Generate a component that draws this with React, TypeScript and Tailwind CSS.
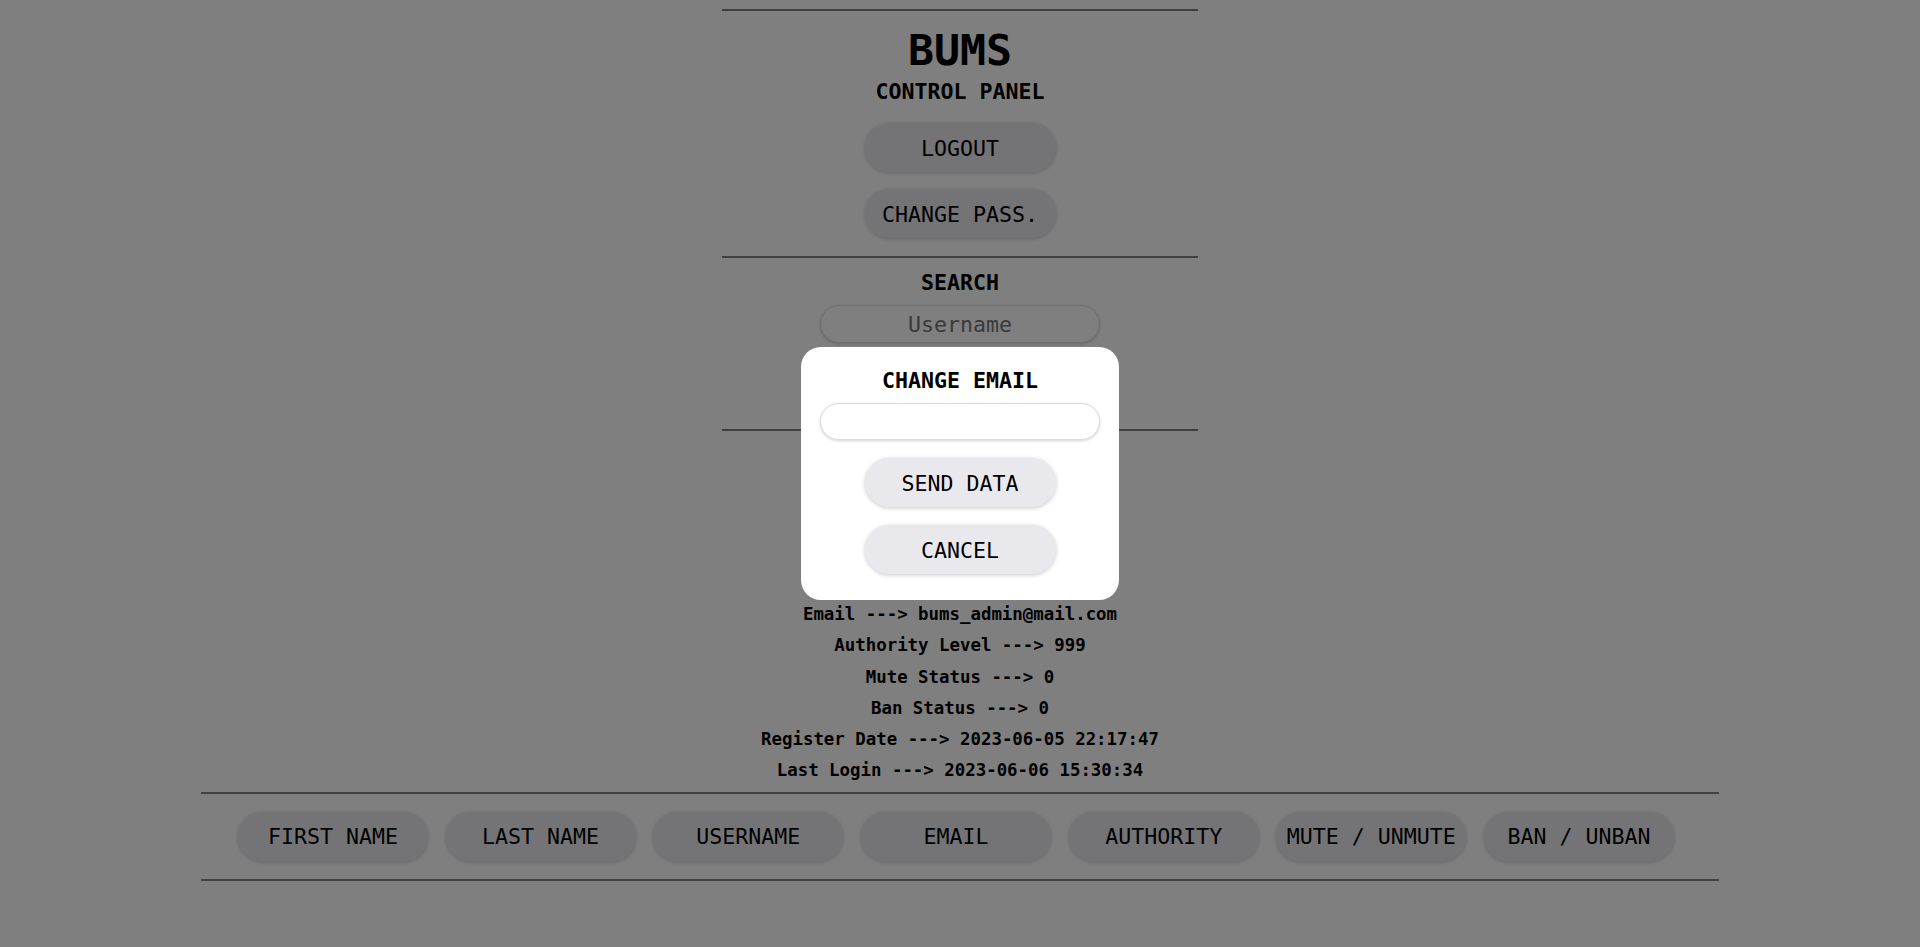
import { useState } from 'react'

const mono = "font-['DejaVu_Sans_Mono','Liberation_Mono',monospace]"

const pill =
    'h-[49px] rounded-full bg-[#e9e9ed] text-[21.6px] text-black shadow-[0_1px_4px_rgba(0,0,0,0.22)] flex items-center justify-center'

const userInfo = [
    ['Email', 'bums_admin@mail.com'],
    ['Authority Level', '999'],
    ['Mute Status', '0'],
    ['Ban Status', '0'],
    ['Register Date', '2023-06-05 22:17:47'],
    ['Last Login', '2023-06-06 15:30:34'],
]

const actions = ['FIRST NAME', 'LAST NAME', 'USERNAME', 'EMAIL', 'AUTHORITY', 'MUTE / UNMUTE', 'BAN / UNBAN']

export default function App() {
    const [search, setSearch] = useState('')
    const [email, setEmail] = useState('')
    const [modalOpen, setModalOpen] = useState(true)

    return (
        <div className={`min-h-screen bg-white text-black ${mono}`}>
            <div className="flex flex-col items-center">
                {/* Header */}
                <div className="w-[476px] flex flex-col items-center">
                    <hr className="w-full mt-[9px] border-0 border-t-2 border-[#808080]" />
                    <h1 className="mt-[14px] h-[50px] leading-[50px] text-[43.2px] font-bold">BUMS</h1>
                    <h2 className="mt-[4px] h-[26px] leading-[26px] text-[21.6px] font-bold">CONTROL PANEL</h2>
                    <button className={`${pill} pt-[4px] w-[191px] mt-[18px]`}>LOGOUT</button>
                    <button className={`${pill} pt-[4px] w-[191px] mt-[17px]`}>CHANGE PASS.</button>
                    <hr className="w-full mt-[18px] border-0 border-t-2 border-[#808080]" />

                    {/* Search */}
                    <h2 className="mt-[12px] h-[26px] leading-[26px] text-[21.6px] font-bold">SEARCH</h2>
                    <input
                        type="text"
                        placeholder="Username"
                        value={search}
                        onChange={(e) => setSearch(e.target.value)}
                        className="mt-[9px] w-[280px] h-[38px] rounded-full bg-white border border-[#dcdcdc] shadow-[0_1px_3px_rgba(0,0,0,0.18)] text-center text-[21.6px] placeholder:text-[#757575] focus:outline-none"
                    />
                    <hr className="w-full mt-[86px] border-0 border-t-2 border-[#808080]" />
                </div>

                {/* User info */}
                <div className="mt-[168px] flex flex-col items-center text-[17.4px] font-bold">
                    {userInfo.map(([label, value]) => (
                        <div key={label} className="h-[31.3px] leading-[31.3px] whitespace-pre">
                            {label} ---&gt; {value}
                        </div>
                    ))}
                </div>

                {/* Actions */}
                <div className="w-[1518px] mt-[5px]">
                    <hr className="w-full border-0 border-t-2 border-[#808080]" />
                    <div className="mt-[18px] pr-[8px] flex justify-center gap-[17.7px]">
                        {actions.map((a) => (
                            <button key={a} className={`${pill} pt-[2px] w-[190px] whitespace-pre`}>
                                {a}
                            </button>
                        ))}
                    </div>
                    <hr className="w-full mt-[18px] border-0 border-t-2 border-[#808080]" />
                </div>
            </div>

            {/* Change email modal */}
            {modalOpen && (
                <div className="fixed inset-0 bg-black/50 flex items-center justify-center">
                    <div className="w-[318px] h-[253px] rounded-[20px] bg-white flex flex-col items-center pt-[21px]">
                        <h2 className="h-[26px] leading-[26px] text-[21.6px] font-bold">CHANGE EMAIL</h2>
                        <input
                            type="text"
                            value={email}
                            onChange={(e) => setEmail(e.target.value)}
                            className="mt-[9px] w-[280px] h-[37px] rounded-full bg-white border border-[#dcdcdc] shadow-[0_1px_3px_rgba(0,0,0,0.18)] text-center text-[21.6px] focus:outline-none"
                        />
                        <button className={`${pill} pt-[3px] w-[191px] mt-[18px]`}>SEND DATA</button>
                        <button onClick={() => setModalOpen(false)} className={`${pill} pt-[3px] w-[191px] mt-[18px]`}>
                            CANCEL
                        </button>
                    </div>
                </div>
            )}
        </div>
    )
}
